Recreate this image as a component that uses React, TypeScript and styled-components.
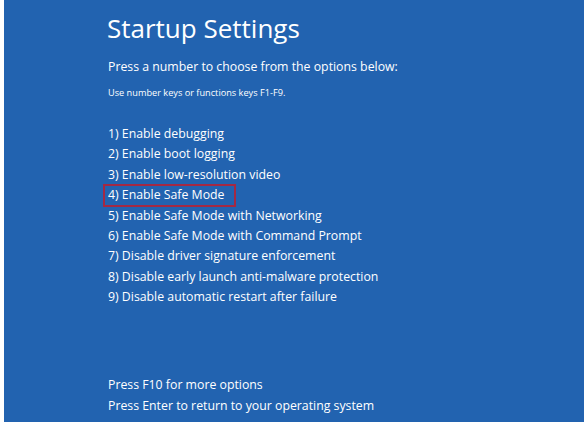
import React from 'react'
import styled, { createGlobalStyle } from 'styled-components'

const GlobalStyle = createGlobalStyle`
  html, body {
    margin: 0;
    padding: 0;
    background: #ffffff;
  }
`

const Screen = styled.div`
  box-sizing: border-box;
  margin-left: 4px;
  width: 580px;
  height: 422px;
  background: #2263b0;
  color: #ffffff;
  font-family: 'Open Sans', 'Noto Sans', sans-serif;
  padding: 9px 0 0 99px;
  display: flex;
  flex-direction: column;
`

const Title = styled.h1`
  margin: 0;
  font-size: 26px;
  font-weight: 400;
  line-height: 38px;
  padding-left: 4px;
`

const Prompt = styled.p`
  margin: 11px 0 0 5px;
  font-size: 12.3px;
  line-height: 18px;
`

const Hint = styled.p`
  margin: 11px 0 0 5px;
  font-size: 9.2px;
  line-height: 12px;
`

const OptionList = styled.ol`
  list-style: none;
  margin: 25px 0 0;
  padding: 0;
  flex-shrink: 0;
`

const Option = styled.li<{ $selected?: boolean }>`
  box-sizing: border-box;
  font-size: 12.3px;
  line-height: 18.4px;
  white-space: nowrap;
  padding: ${(p) => (p.$selected ? '0.5px 3px' : '1px 5px')};
  margin: ${(p) => (p.$selected ? '-1.5px 0' : '0')};
  width: ${(p) => (p.$selected ? '133px' : 'auto')};
  border: ${(p) => (p.$selected ? '2px solid #a32944' : 'none')};
`

const Footer = styled.div`
  margin-top: auto;
  padding: 0 0 6px 5px;
  font-size: 12.3px;
  line-height: 21px;
`

const options = [
  'Enable debugging',
  'Enable boot logging',
  'Enable low-resolution video',
  'Enable Safe Mode',
  'Enable Safe Mode with Networking',
  'Enable Safe Mode with Command Prompt',
  'Disable driver signature enforcement',
  'Disable early launch anti-malware protection',
  'Disable automatic restart after failure',
]

export default function App() {
  return (
    <>
      <GlobalStyle />
      <Screen>
        <Title>Startup Settings</Title>
        <Prompt>Press a number to choose from the options below:</Prompt>
        <Hint>Use number keys or functions keys F1-F9.</Hint>
        <OptionList>
          {options.map((label, i) => (
            <Option key={label} $selected={i === 3}>
              {i + 1}) {label}
            </Option>
          ))}
        </OptionList>
        <Footer>
          <div>Press F10 for more options</div>
          <div>Press Enter to return to your operating system</div>
        </Footer>
      </Screen>
    </>
  )
}
